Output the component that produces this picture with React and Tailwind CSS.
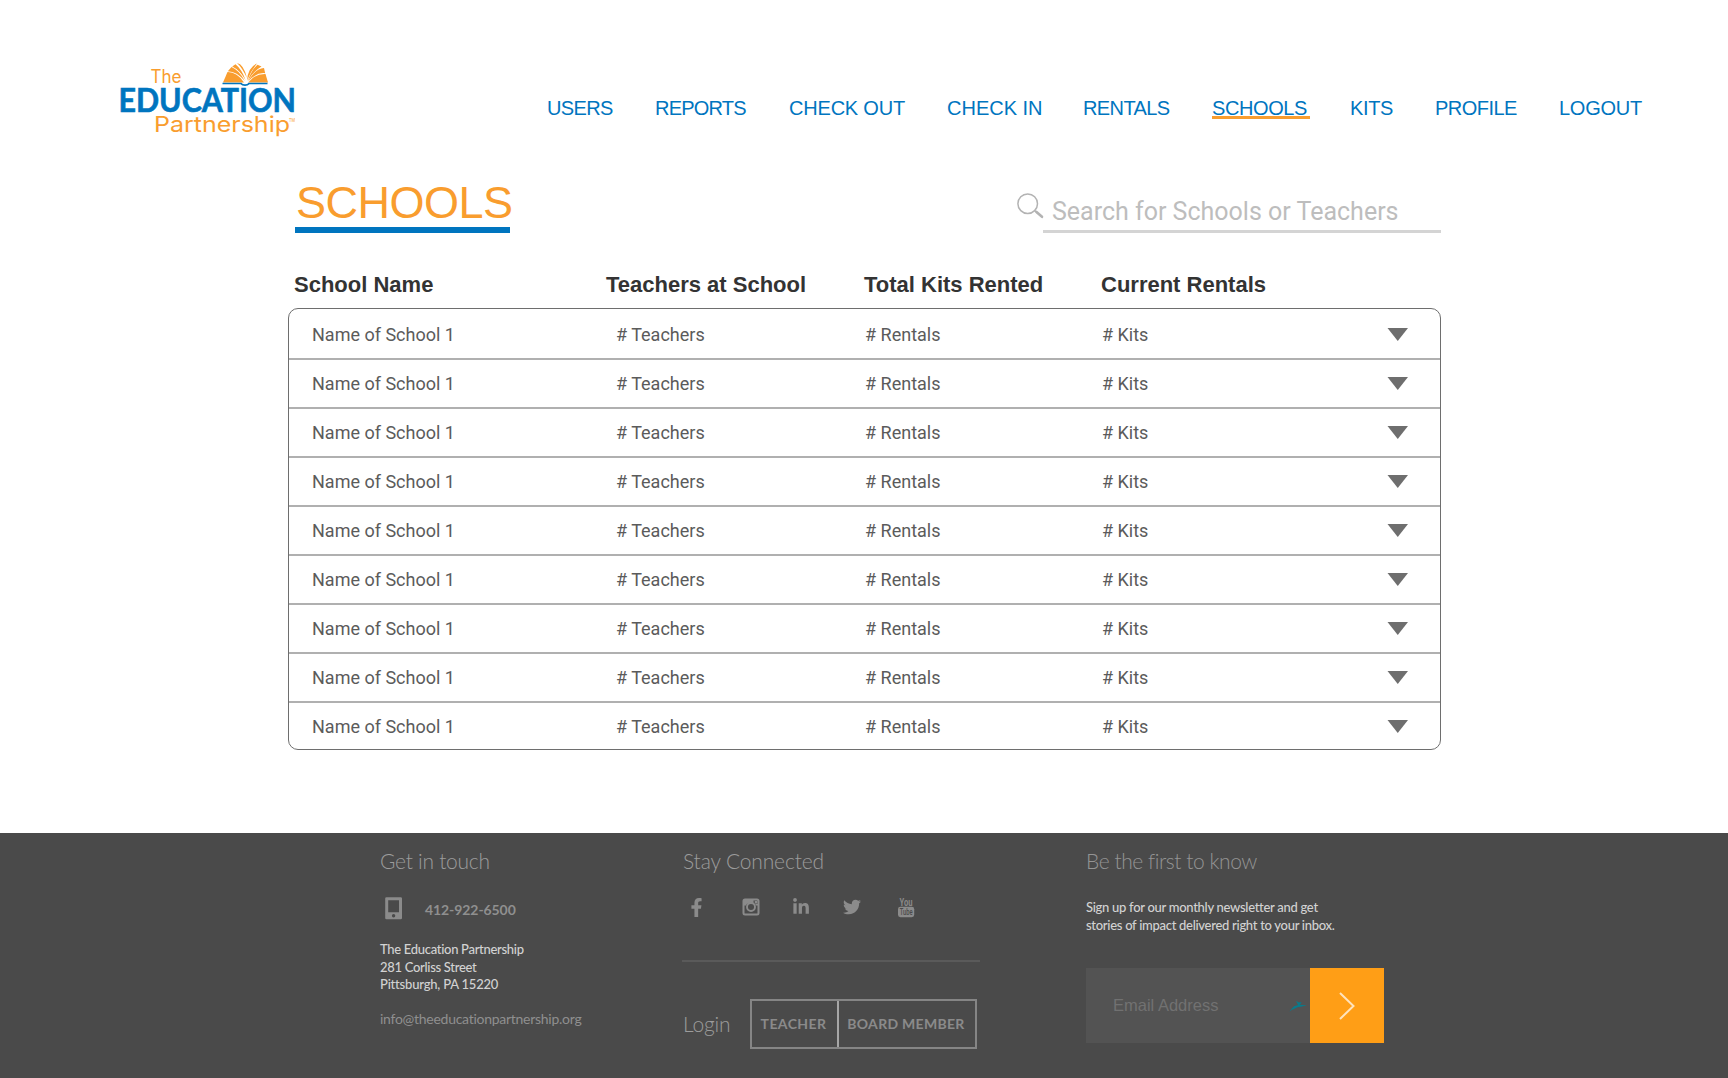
import { FaFacebookF, FaLinkedinIn, FaTwitter } from 'react-icons/fa';

const NAV = [
  { label: 'USERS', tracking: 'tracking-[-0.64px]' },
  { label: 'REPORTS', tracking: 'tracking-[-0.8px]' },
  { label: 'CHECK OUT', tracking: 'tracking-[-0.2px]' },
  { label: 'CHECK IN', tracking: 'tracking-normal' },
  { label: 'RENTALS', tracking: 'tracking-[-0.6px]' },
  { label: 'SCHOOLS', tracking: 'tracking-[-0.4px]', active: true },
  { label: 'KITS', tracking: 'tracking-[-0.37px]' },
  { label: 'PROFILE', tracking: 'tracking-[-0.54px]' },
  { label: 'LOGOUT', tracking: 'tracking-[-0.25px]' },
];

const SCHOOLS = Array.from({ length: 9 }, (_, id) => ({
  id,
  name: 'Name of School 1',
  teachers: '# Teachers',
  rentals: '# Rentals',
  kits: '# Kits',
}));

function Logo() {
  return (
    <svg width="180" height="82" viewBox="0 0 180 82" className="block" role="img">
      <g fontFamily="Inter, sans-serif" fill="#f99d2e">
        <text x="30.5" y="25" fontSize="18" textLength="31" lengthAdjust="spacingAndGlyphs">The</text>
        <text x="34" y="74" fontSize="21.5" textLength="136" lengthAdjust="spacingAndGlyphs">Partnership</text>
        <text x="169" y="64" fontSize="4.5" textLength="6" lengthAdjust="spacingAndGlyphs">TM</text>
      </g>
      <text x="-1.500" y="53.7" fontFamily="Lato, sans-serif" fontWeight="700" fontSize="31.5" fill="#0075bf" stroke="#0075bf" strokeWidth="0.6" textLength="177.500" lengthAdjust="spacingAndGlyphs">EDUCATION</text>
      <g fill="#f99d2e">
        <path d="M103 24.500L107.500 14Q117 13.700 124 24.500Z" />
        <path d="M107.800 13.200L111.500 9Q119.500 12.500 124.800 23Q117 13.500 107.800 13.200Z" />
        <path d="M112.200 8.600L115.500 6.200Q122 11.500 125.500 22Q119.500 12 112.200 8.600Z" />
        <path d="M117 5Q123.500 6 127 20Q122 9.500 117 5Z" />
        <path d="M127 22.500Q128 9 137 5.500Q131.500 12 127 22.500Z" />
        <path d="M127.700 23Q131.800 11.500 137.500 6.700L141.500 8.600Q133.500 13.200 127.700 23Z" />
        <path d="M128.200 23.500Q134.500 11 144 10L145.200 15.200Q136 14.200 128.200 23.500Z" />
        <path d="M128.200 24.500Q135 15.500 145.500 15.900L148 24.500Z" />
      </g>
      <path d="M102.500 24.800H121.500Q122.500 26.300 125 26.300Q127.500 26.300 128.500 24.800H147.500V26.200H129.500Q128 28 125 28Q122 28 120.500 26.200H102.500Z" fill="#0075bf" />
    </svg>
  );
}

function SearchIcon() {
  return (
    <svg width="27" height="27" viewBox="0 0 27 27" className="ml-px block" fill="none" stroke="#b3b3b3">
      <circle cx="10.700" cy="10.700" r="9.800" strokeWidth="1.500" />
      <path d="M17.500 17.500L20.500 20" strokeWidth="1.500" />
      <path d="M19.500 19L25 23.800" strokeWidth="2.600" strokeLinecap="round" />
    </svg>
  );
}

function InstagramIcon() {
  return (
    <svg width="18" height="18" viewBox="0 0 18 18" className="block">
      <rect x="1.500" y="1.500" width="15" height="15" rx="1.500" fill="none" stroke="currentColor" strokeWidth="2" />
      <path d="M2 2H11.500V6H16V7.500H14L13 5.800H5L4 7.500H2Z" fill="currentColor" />
      <circle cx="9" cy="9" r="4" fill="none" stroke="currentColor" strokeWidth="1.900" />
      <rect x="12.800" y="3" width="2.500" height="2.500" fill="currentColor" />
    </svg>
  );
}

function YouTubeIcon() {
  return (
    <svg width="18" height="22" viewBox="0 0 18 22" className="ml-px block">
      <text x="2.500" y="9.500" fontFamily="Roboto, sans-serif" fontWeight="700" fontSize="11.500" textLength="13" lengthAdjust="spacingAndGlyphs" fill="currentColor">You</text>
      <rect x="1" y="10.800" width="16.200" height="10.400" rx="2.400" fill="currentColor" />
      <text x="2.800" y="19.300" fontFamily="Roboto, sans-serif" fontWeight="500" fontSize="9" textLength="12.800" lengthAdjust="spacingAndGlyphs" fill="#4a4a4a">Tube</text>
    </svg>
  );
}

function PhoneIcon() {
  return (
    <svg width="18" height="23" viewBox="0 0 18 23" className="block">
      <path fill="#8b8b8b" fillRule="evenodd" d="M1.500 .3H15.700Q17 .3 17 1.600V21Q17 22.300 15.700 22.300H1.500Q.2 22.300 .2 21V1.600Q.2 .3 1.500 .3ZM3.200 3.200V15.300H14V3.200ZM8.600 17A1.700 1.700 0 1 0 8.600 20.400A1.700 1.700 0 1 0 8.600 17Z" />
    </svg>
  );
}

function Header() {
  return (
    <header className="flex h-[165px] pl-[120px] pt-[58px]">
      <div className="w-[427px]">
        <Logo />
      </div>
      <nav className="grid h-[61px] grid-cols-[108px_134px_158px_136px_129px_138px_85px_124px_90px] items-end text-xl leading-[24px] text-[#0075bf]">
        {NAV.map(({ label, tracking, active }) => (
          <a
            key={label}
            className={
              active
                ? `h-[22px] w-[98px] justify-self-start border-b-[3px] border-[#f99d2e] leading-[22px] ${tracking}`
                : `h-[22px] leading-[22px] ${tracking}`
            }
          >
            {label}
          </a>
        ))}
      </nav>
    </header>
  );
}

function SchoolsTable() {
  return (
    <section className="ml-[288px] mt-[34px] w-[1153px]">
      <div className="grid grid-cols-[312px_258px_237px_auto] pb-[7px] pl-[6px] text-[22px] font-bold leading-8 text-[#333333]">
        <h2>School Name</h2>
        <h2>Teachers at School</h2>
        <h2>Total Kits Rented</h2>
        <h2>Current Rentals</h2>
      </div>
      <div className="rounded-[10px] border border-[#6e6e6e] pt-[2px] font-[Roboto,sans-serif] text-lg leading-[47px] text-[#5b5b5b]">
        {SCHOOLS.map((school) => (
          <div
            key={school.id}
            className="grid h-[49px] grid-cols-[304px_249px_237px_285px_auto] border-b-2 border-[#b0b0b0] pl-[23px] last:h-[46px] last:border-b-0"
          >
            <span>{school.name}</span>
            <span>{school.teachers}</span>
            <span>{school.rentals}</span>
            <span>{school.kits}</span>
            <svg width="21" height="13" viewBox="0 0 21 13" className="mt-[17px]">
              <path d="M.5 0H21L10.750 13Z" fill="#6e6e6e" />
            </svg>
          </div>
        ))}
      </div>
    </section>
  );
}

function Contact() {
  return (
    <div>
      <h3 className="text-[21px] font-light leading-[26px] tracking-[-0.27px] text-[#9c9c9c]">Get in touch</h3>
      <div className="mt-[23px] flex h-[22px] items-center pl-[5px]">
        <PhoneIcon />
        <span className="pl-[22px] pt-[3px] text-sm font-bold leading-5 tracking-[-0.08px] text-[#8f8f8f]">412-922-6500</span>
      </div>
      <address className="mt-[22px] text-[13px] font-medium not-italic leading-[17.7px] text-[#d2d2d2]">
        <p className="tracking-[-0.3px]">The Education Partnership</p>
        <p className="tracking-[-0.3px]">281 Corliss Street</p>
        <p className="tracking-[-0.2px]">Pittsburgh, PA 15220</p>
      </address>
      <p className="mt-[15px] text-sm leading-[20px] tracking-[-0.27px] text-[#8f8f8f]">info@theeducationpartnership.org</p>
    </div>
  );
}

function Connect() {
  return (
    <div>
      <h3 className="pl-px text-[21px] font-light leading-[26px] tracking-[-0.15px] text-[#9c9c9c]">Stay Connected</h3>
      <div className="mt-[22px] grid h-[22px] grid-cols-[52px_50px_50px_54px_20px] items-center pl-[8px] text-[#8b8b8b]">
        <FaFacebookF className="h-[19px] w-[13px]" />
        <InstagramIcon />
        <FaLinkedinIn className="h-[18px] w-[18px]" />
        <FaTwitter className="ml-px h-[18px] w-[18px]" />
        <YouTubeIcon />
      </div>
      <hr className="mt-[42px] w-[298px] border-t-2 border-[#5a5a5a]" />
      <div className="mt-[37px] flex h-[50px] items-center">
        <span className="w-[68px] pb-px pl-px text-[21px] font-light leading-[26px] tracking-[-0.2px] text-[#9c9c9c]">Login</span>
        <div className="flex h-full w-[227px] border-2 border-[#858585] text-sm font-bold leading-[43px] text-[#8a8a8a]">
          <button className="w-[87px] border-r-2 border-[#a6a6a6] pb-[2px] pr-[2px] tracking-[0.4px]">TEACHER</button>
          <button className="grow pb-[2px] pr-[2px] tracking-[0.3px]">BOARD MEMBER</button>
        </div>
      </div>
    </div>
  );
}

function Newsletter() {
  return (
    <div>
      <h3 className="text-[21px] font-light leading-[26px] tracking-[-0.45px] text-[#949494]">Be the first to know</h3>
      <p className="mt-[25px] whitespace-nowrap text-[13px] font-medium leading-[17.5px] tracking-[-0.29px] text-[#d2d2d2]">
        Sign up for our monthly newsletter and get
        <br />
        stories of impact delivered right to your inbox.
      </p>
      <div className="mt-[34px] flex h-[75px] w-[298px] items-center bg-[#535353] pl-[27px]">
        <span className="w-[176px] pb-[2px] font-['Liberation_Sans',sans-serif] text-[16.5px] leading-6 text-[#717171]">Email Address</span>
        <svg width="18" height="12" viewBox="0 0 18 12" className="mr-[3px] block shrink-0">
          <path d="M.3 11.700Q3 8 5 6.300L9 5L7 .8L9.500 2.300H12.700L10.800 4.800L17.700 5.300Q13 7 8.500 7.200L6 8.500Q3 9.500 .3 11.700Z" fill="#0a7a8c" />
        </svg>
        <button className="flex h-full w-[74px] shrink-0 items-center justify-center bg-[#ff9e16]">
          <svg width="16" height="28" viewBox="0 0 16 28" fill="none" stroke="#ffe3bd" strokeWidth="2">
            <path d="M1 1L14.500 14L1 27" />
          </svg>
        </button>
      </div>
    </div>
  );
}

export default function App() {
  return (
    <div className="flex h-[1078px] w-[1728px] flex-col overflow-hidden bg-white font-['Liberation_Sans',sans-serif]">
      <Header />
      <div className="flex h-[70px] justify-between pl-[295px] pr-[287px]">
        <h1 className="h-[68px] w-[215px] whitespace-nowrap border-b-[6px] border-[#0075bf] pl-px pt-[13px] text-[45px] leading-[50px] tracking-[-0.5px] text-[#f99d2e]">SCHOOLS</h1>
        <div className="flex pt-[28px]">
          <SearchIcon />
          <div className="-ml-px h-[40px] w-[398px] border-b-[3px] border-[#d4d4d4] pl-[9px] pt-[3px] font-[Roboto,sans-serif] text-[25px] leading-8 text-[#bdbdbd]">Search for Schools or Teachers</div>
        </div>
      </div>
      <SchoolsTable />
      <footer className="mt-[83px] grid grow grid-cols-[302px_404px_auto] bg-[#4a4a4a] pl-[380px] pt-[15px] font-[Lato,sans-serif]">
        <Contact />
        <Connect />
        <Newsletter />
      </footer>
    </div>
  );
}
